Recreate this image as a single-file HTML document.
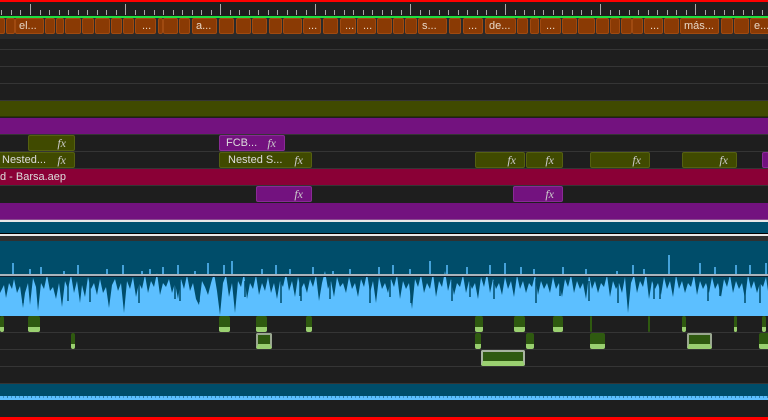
<!DOCTYPE html>
<html><head><meta charset="utf-8"><style>
*{margin:0;padding:0;box-sizing:border-box}
body{width:768px;height:420px;overflow:hidden;background:#1e1e1e;position:relative;font-family:"Liberation Sans",sans-serif}
div{position:absolute}
.r{left:0;width:768px}
.ln{left:0;width:768px;height:1px;background:#353535}
.cap{top:18px;height:16px;background:#8a3a04;border:1px solid #a04a10;border-radius:2px;color:#e8d8c8;font-size:11px;line-height:14px;padding-left:3px;overflow:hidden;white-space:nowrap}
.ol{height:16px;background:#404a00;border:1px solid #556010;border-radius:2px;color:#ddd;font-size:11px;line-height:14px;padding-left:3px;white-space:nowrap;overflow:hidden}
.pu{height:16px;background:#73127f;border:1px solid #8a2a96;border-radius:2px;color:#ddd;font-size:11px;line-height:14px;padding-left:6px;white-space:nowrap;overflow:hidden}
.fx{position:absolute;right:8px;top:0;font-style:italic;font-family:"Liberation Serif",serif;font-size:12px;color:#ccc}
.kf{height:16px;background:#2f5a10;border-radius:2px;border-bottom:5px solid #9ad070}
</style></head><body>
<div class="r" style="top:0;height:2px;background:#f00"></div>
<svg style="position:absolute;left:0;top:0" width="768" height="16">
<g stroke="#aaa" stroke-width="1">
<path d="M30.5 4V15M125.5 4V15M220.5 4V15M315.5 4V15M410.5 4V15M505.5 4V15M600.5 4V15M695.5 4V15"/>
<path d="M1.5 10V15M11.5 10V15M20.5 10V15M40.5 10V15M49.5 10V15M59.5 10V15M68.5 10V15M78.5 10V15M87.5 10V15M97.5 10V15M106.5 10V15M116.5 10V15M135.5 10V15M144.5 10V15M154.5 10V15M163.5 10V15M173.5 10V15M182.5 10V15M192.5 10V15M201.5 10V15M211.5 10V15M230.5 10V15M239.5 10V15M249.5 10V15M258.5 10V15M268.5 10V15M277.5 10V15M287.5 10V15M296.5 10V15M306.5 10V15M325.5 10V15M334.5 10V15M344.5 10V15M353.5 10V15M363.5 10V15M372.5 10V15M382.5 10V15M391.5 10V15M401.5 10V15M420.5 10V15M429.5 10V15M439.5 10V15M448.5 10V15M458.5 10V15M467.5 10V15M477.5 10V15M486.5 10V15M496.5 10V15M515.5 10V15M524.5 10V15M534.5 10V15M543.5 10V15M553.5 10V15M562.5 10V15M572.5 10V15M581.5 10V15M591.5 10V15M610.5 10V15M619.5 10V15M629.5 10V15M638.5 10V15M648.5 10V15M657.5 10V15M667.5 10V15M676.5 10V15M686.5 10V15M705.5 10V15M714.5 10V15M724.5 10V15M733.5 10V15M743.5 10V15M752.5 10V15M762.5 10V15"/>
</g></svg>
<div class="r" style="top:16px;height:2px;background:#1ee040"></div>
<div class="r" style="top:18px;height:21px;background:#2a2a2a"></div>
<div class="cap" style="left:-2px;width:7px"></div><div class="cap" style="left:6px;width:9px"></div>
<div class="cap" style="left:15px;width:29px">el...</div><div class="cap" style="left:45px;width:10px"></div>
<div class="cap" style="left:56px;width:8px"></div><div class="cap" style="left:65px;width:16px"></div>
<div class="cap" style="left:82px;width:12px"></div><div class="cap" style="left:95px;width:15px"></div>
<div class="cap" style="left:111px;width:11px"></div><div class="cap" style="left:123px;width:11px"></div>
<div class="cap" style="left:135px;width:21px;padding-left:6px">...</div><div class="cap" style="left:158px;width:4px"></div>
<div class="cap" style="left:163px;width:15px"></div><div class="cap" style="left:179px;width:11px"></div>
<div class="cap" style="left:192px;width:25px">a...</div><div class="cap" style="left:219px;width:15px"></div>
<div class="cap" style="left:236px;width:15px"></div><div class="cap" style="left:252px;width:15px"></div>
<div class="cap" style="left:269px;width:13px"></div><div class="cap" style="left:283px;width:19px"></div>
<div class="cap" style="left:303px;width:18px;padding-left:4px">...</div><div class="cap" style="left:323px;width:15px"></div>
<div class="cap" style="left:340px;width:16px;padding-left:4px">...</div><div class="cap" style="left:357px;width:19px;padding-left:5px">...</div>
<div class="cap" style="left:377px;width:15px"></div><div class="cap" style="left:393px;width:11px"></div>
<div class="cap" style="left:405px;width:12px"></div><div class="cap" style="left:418px;width:29px">s...</div>
<div class="cap" style="left:449px;width:12px"></div><div class="cap" style="left:463px;width:20px;padding-left:4px">...</div>
<div class="cap" style="left:485px;width:31px">de...</div><div class="cap" style="left:517px;width:11px"></div>
<div class="cap" style="left:530px;width:9px"></div><div class="cap" style="left:540px;width:21px;padding-left:5px">...</div>
<div class="cap" style="left:562px;width:15px"></div><div class="cap" style="left:578px;width:17px"></div>
<div class="cap" style="left:596px;width:13px"></div><div class="cap" style="left:610px;width:10px"></div>
<div class="cap" style="left:621px;width:11px"></div><div class="cap" style="left:632px;width:11px"></div>
<div class="cap" style="left:644px;width:19px;padding-left:5px">...</div><div class="cap" style="left:664px;width:15px"></div>
<div class="cap" style="left:680px;width:39px">más...</div><div class="cap" style="left:721px;width:12px"></div>
<div class="cap" style="left:734px;width:15px"></div><div class="cap" style="left:750px;width:20px">e...</div>
<div class="ln" style="top:49px"></div><div class="ln" style="top:66px"></div><div class="ln" style="top:83px"></div><div class="ln" style="top:100px"></div>
<div class="r" style="top:101px;height:16px;background:#404a00;border-bottom:1px solid #2d3500"></div>
<div class="r" style="top:118px;height:16px;background:#73127f"></div>
<div class="ln" style="top:134px"></div><div class="ln" style="top:151px"></div><div class="ln" style="top:168px"></div>
<div class="ol" style="top:135px;left:28px;width:47px"><span class="fx">fx</span></div>
<div class="pu" style="top:135px;left:219px;width:66px">FCB...<span class="fx">fx</span></div>
<div class="ol" style="top:152px;left:-2px;width:77px">Nested...<span class="fx">fx</span></div>
<div class="ol" style="top:152px;left:219px;width:93px;padding-left:8px">Nested S...<span class="fx">fx</span></div>
<div class="ol" style="top:152px;left:475px;width:50px"><span class="fx">fx</span></div>
<div class="ol" style="top:152px;left:526px;width:37px"><span class="fx">fx</span></div>
<div class="ol" style="top:152px;left:590px;width:60px"><span class="fx">fx</span></div>
<div class="ol" style="top:152px;left:682px;width:55px"><span class="fx">fx</span></div>
<div class="pu" style="top:152px;left:762px;width:10px"></div>
<div class="r" style="top:169px;height:16px;background:#8a0036;color:#ddd;font-size:11px;line-height:16px;padding-left:0">d - Barsa.aep</div>
<div class="ln" style="top:185px"></div>
<div class="pu" style="top:186px;left:256px;width:56px"><span class="fx">fx</span></div>
<div class="pu" style="top:186px;left:513px;width:50px"><span class="fx">fx</span></div>
<div class="r" style="top:203px;height:16px;background:#73127f"></div>
<div class="r" style="top:219px;height:1px;background:#8a4a90"></div>
<div class="r" style="top:220px;height:2px;background:#e8e8e8"></div>
<div class="r" style="top:222px;height:11px;background:#005070"></div>
<div class="r" style="top:233px;height:1px;background:#000"></div>
<div class="r" style="top:234px;height:2px;background:#e8e8e8"></div>
<div class="r" style="top:236px;height:5px;background:#303030"></div>
<div class="r" style="top:241px;height:74px;background:#004d6a"></div>
<svg style="position:absolute;left:0;top:241px" width="768" height="75">
<path transform="translate(0,12)" fill="#5cbfff" d="M0 74V40L4 32 6 45 9 30 12 36 14 26 17 40 20 33 23 55 25 40 28 30 30 52 33 25 36 34 38 58 41 30 44 36 47 22 50 38 53 34 56 46 59 30 62 54 65 28 68 36 71 22 74 40 77 28 80 50 82 32 85 44 88 24 91 36 94 30 97 42 100 26 103 40 106 34 109 55 112 32 115 26 118 38 121 30 124 60 127 28 130 36 133 24 136 44 139 30 142 36 145 22 148 40 151 28 154 34 157 20 160 42 163 30 166 34 169 26 172 40 175 30 178 46 181 26 184 36 187 22 190 38 193 30 196 46 199 52 202 28 205 34 208 42 211 30 214 20 217 38 220 62 223 30 226 22 229 44 232 30 235 60 238 28 241 34 244 20 247 46 250 30 253 36 256 22 259 42 262 30 265 38 268 24 271 40 274 30 277 46 280 28 283 34 286 20 289 38 292 28 295 44 298 24 301 36 304 30 307 40 310 26 313 34 316 22 319 48 322 30 325 18 328 36 331 28 334 44 337 24 340 34 343 30 346 40 349 24 352 36 355 30 358 44 361 26 364 34 367 20 370 40 373 28 376 50 379 24 382 36 385 30 388 40 391 26 394 34 397 22 400 46 403 28 406 36 409 30 412 56 415 26 418 34 421 22 424 40 427 30 430 36 433 20 436 44 439 28 442 34 445 18 448 38 451 26 454 42 457 30 460 34 463 22 466 40 469 28 472 36 475 30 478 46 481 24 484 34 487 20 490 40 493 26 496 36 499 30 502 42 505 24 508 36 511 28 514 44 517 22 520 36 523 28 526 40 529 30 532 34 535 22 538 42 541 28 544 36 547 30 550 40 553 24 556 36 559 30 562 44 565 26 568 34 571 22 574 40 577 28 580 36 583 30 586 46 589 22 592 36 595 28 598 40 601 30 604 34 607 22 610 44 613 28 616 36 619 30 622 40 625 24 628 60 631 30 634 22 637 40 640 28 643 34 646 20 649 46 652 28 655 36 658 30 661 42 664 24 667 36 670 28 673 44 676 22 679 36 682 28 685 40 688 30 691 34 694 22 697 42 700 28 703 36 706 30 709 40 712 24 715 36 718 30 721 44 724 26 727 34 730 22 733 40 736 28 739 36 742 30 745 46 748 22 751 36 754 28 757 40 760 30 763 34 766 24 768 38V74Z"/>
<path stroke="#5cbfff" stroke-width="1.5" d="M13 22V36M30 28V36M41 26V36M64 30V36M78 24V36M107 28V36M123 24V36M142 30V36M150 28V36M163 26V36M178 24V36M195 30V36M208 22V36M224 24V36M232 20V36M262 28V36M276 24V36M290 28V36M313 26V36M333 30V36M350 28V36M379 26V36M393 24V36M410 28V36M430 20V36M447 24V36M467 26V36M490 24V36M505 22V36M521 26V36M534 28V36M563 26V36M586 28V36M617 30V36M633 24V36M644 28V36M669 14V36M700 22V36M715 26V36M736 24V36M750 24V36M766 22V36"/>
<path stroke="#004d6a" stroke-width="1.5" d="M23 35V62M68 36V60M90 40V61M124 40V60M139 33V62M175 40V58M180 40V60M199 40V61M220 40V62M235 40V60M245 40V56M281 40V62M301 42V60M330 40V58M370 38V62M411 36V62M452 40V60M494 40V58M536 38V62M589 40V60M618 38V62M654 40V58M708 42V60M745 40V62M760 40V62M300 40V55M390 40V56M470 40V56M560 40V55M660 40V58M720 40V55" />
<rect x="0" y="33" width="768" height="2" fill="#aab4bc"/>
<rect x="0" y="35" width="768" height="1" fill="#102030"/>
</svg>
<div class="r" style="top:315px;height:1px;background:#5cbfff"></div>
<div class="ln" style="top:332px"></div><div class="ln" style="top:349px"></div><div class="ln" style="top:366px"></div><div class="ln" style="top:383px"></div>
<div class="kf" style="top:316px;left:0;width:4px"></div><div class="kf" style="top:316px;left:28px;width:12px"></div>
<div class="kf" style="top:316px;left:219px;width:11px"></div><div class="kf" style="top:316px;left:256px;width:11px"></div>
<div class="kf" style="top:316px;left:306px;width:6px"></div><div class="kf" style="top:316px;left:475px;width:8px"></div>
<div class="kf" style="top:316px;left:514px;width:11px"></div><div class="kf" style="top:316px;left:553px;width:10px"></div>
<div class="kf" style="top:316px;left:590px;width:2px;border-bottom:0"></div><div class="kf" style="top:316px;left:648px;width:2px;border-bottom:0"></div>
<div class="kf" style="top:316px;left:682px;width:4px"></div><div class="kf" style="top:316px;left:734px;width:3px"></div><div class="kf" style="top:316px;left:762px;width:4px"></div>
<div class="kf" style="top:333px;left:71px;width:4px"></div><div class="kf" style="top:333px;left:256px;width:16px;border:2px solid #9aa890;border-bottom:5px solid #9ad070"></div>
<div class="kf" style="top:333px;left:475px;width:6px"></div><div class="kf" style="top:333px;left:526px;width:8px"></div>
<div class="kf" style="top:333px;left:590px;width:15px"></div><div class="kf" style="top:333px;left:687px;width:25px;border:2px solid #9aa890;border-bottom:5px solid #9ad070"></div>
<div class="kf" style="top:333px;left:759px;width:12px"></div>
<div class="kf" style="top:350px;left:481px;width:44px;border:2px solid #a8b4a0;border-bottom:5px solid #9ad070"></div>
<div class="r" style="top:384px;height:16px;background:#004d6a"></div>
<div class="r" style="top:396px;height:4px;background:repeating-linear-gradient(90deg,#5cbfff 0 3px,#3a90c8 3px 4px,#5cbfff 4px 7px,#2a7aa8 7px 8px)"></div>
<div class="r" style="top:398px;height:2px;background:#5cbfff"></div>
<div class="r" style="top:417px;height:3px;background:#f00"></div>
</body></html>
